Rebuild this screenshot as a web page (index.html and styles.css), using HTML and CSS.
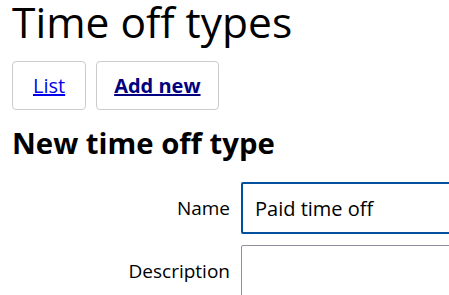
FILE: index.html
```html
<!DOCTYPE html>
<html lang="en">
<head>
<meta charset="utf-8">
<title>Time off types</title>
<link rel="stylesheet" href="styles.css">
</head>
<body>
<h1 class="title">Time off types</h1>
<nav class="tabs">
  <a class="tab tab-list" href="#">List</a>
  <a class="tab tab-active" href="#">Add new</a>
</nav>
<h2 class="subtitle">New time off type</h2>
<form class="form">
  <label class="label" for="name">Name</label>
  <input class="input input-focus" id="name" type="text" value="Paid time off">
  <label class="label" for="desc">Description</label>
  <textarea class="input" id="desc"></textarea>
</form>
</body>
</html>
```
FILE: styles.css
```css
html, body {
  margin: 0;
  padding: 0;
  overflow: hidden;
}
body {
  font-family: "Open Sans", "Noto Sans", sans-serif;
  color: #000;
  padding: 0 0 0 12px;
  width: 449px;
  box-sizing: border-box;
}
.title {
  font-size: 42.5px;
  font-weight: 400;
  line-height: 43px;
  margin: 0;
  white-space: nowrap;
}
.tabs {
  display: flex;
  gap: 10px;
  margin-top: 18px;
}
.tab {
  display: block;
  border: 1px solid #cccccc;
  border-radius: 4px;
  padding: 0 17px;
  height: 47px;
  line-height: 47px;
  font-size: 20px;
  color: #0000ee;
}
.tab-list {
  padding: 0 20px;
}
.tab-active {
  font-weight: 700;
  color: #000080;
}
.subtitle {
  font-size: 29.3px;
  font-weight: 700;
  line-height: 36px;
  margin: 15px 0 0 0;
  white-space: nowrap;
}
.form {
  display: grid;
  grid-template-columns: 218px 1fr;
  column-gap: 11px;
  row-gap: 11px;
  margin-top: 21px;
  align-items: start;
}
.label {
  text-align: right;
  font-size: 19px;
  line-height: 52px;
}
.input {
  font-family: inherit;
  font-size: 20px;
  box-sizing: border-box;
  width: 230px;
  height: 52px;
  border: 1px solid #8f8f9d;
  border-radius: 2px;
  padding: 0 12px;
  margin: 0;
  background: #fff;
  color: #000;
}
.input-focus {
  border: 2px solid #00509e;
  outline: none;
}
textarea.input {
  height: 60px;
  resize: none;
}
```
